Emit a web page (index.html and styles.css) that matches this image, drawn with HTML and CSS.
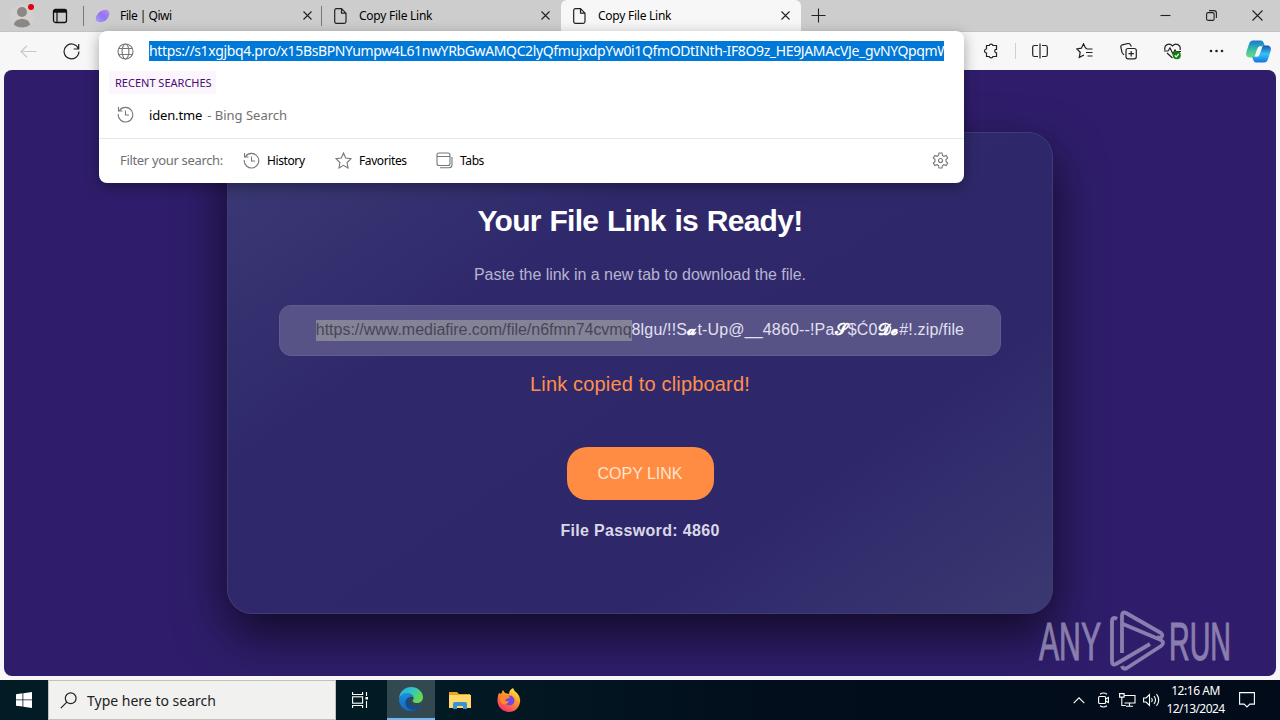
FILE: index.html
```html
<!DOCTYPE html>
<html lang="en">
<head>
    <meta charset="UTF-8">
    <meta name="viewport" content="width=device-width, initial-scale=1.0">
    <title>Copy File Link</title>
    <link rel="stylesheet" href="styles.css">
</head>
<body>
    <!-- Tab strip -->
    <div class="tab-bar">
        <svg class="profile" width="26" height="26" viewBox="0 0 26 26">
            <circle cx="13" cy="13" r="12" fill="#d4d0ce"/>
            <circle cx="13" cy="9" r="5" fill="#8b8785"/>
            <path d="M5 22c0-8 16-8 16 0q-8 5-16 0z" fill="#8b8785"/>
            <circle cx="22" cy="4" r="3" fill="#e3000f"/>
        </svg>
        <svg class="tab-actions" width="16" height="16" viewBox="0 0 16 16" fill="none" stroke="#111">
            <rect x="1.500" y="1.500" width="13" height="13" rx="2" stroke-width="1.300"/>
            <path d="M1.500 3.200h13" stroke-width="3"/>
            <path d="M5 4v10.500" stroke-width="1.200"/>
        </svg>
        <div class="tab tab-first">
            <svg width="16" height="16" viewBox="0 0 16 16">
                <defs>
                    <linearGradient id="qiwi" x1="0" y1="1" x2="1" y2="0">
                        <stop offset="0" stop-color="#a8a1ff"/>
                        <stop offset=".5" stop-color="#9275ed"/>
                        <stop offset="1" stop-color="#b88af5"/>
                    </linearGradient>
                </defs>
                <path d="M1 9C3 4 8 1 12 2c4 2 2 7 0 9-3 4-10 4-11 1-.5-1-.3-2 0-3z" fill="url(#qiwi)"/>
            </svg>
            <span class="tab-title title-qiwi">File | Qiwi</span>
            <svg class="close" width="9" height="9" viewBox="0 0 9 9"><path d="M.5.5l8 8M8.500.5l-8 8"/></svg>
        </div>
        <div class="tab">
            <svg class="doc" width="13" height="16" viewBox="0 0 13 16"><path d="M2.500.7H7.500L12 5.200v8.300q0 1.800-1.800 1.800H2.500Q.7 15.300.7 13.500v-11Q.7.7 2.500.7zM7.500.7v4.500H12"/></svg>
            <span class="tab-title">Copy File Link</span>
            <svg class="close" width="9" height="9" viewBox="0 0 9 9"><path d="M.5.5l8 8M8.500.5l-8 8"/></svg>
        </div>
        <div class="tab tab-active">
            <svg class="doc" width="13" height="16" viewBox="0 0 13 16"><path d="M2.500.7H7.500L12 5.200v8.300q0 1.800-1.800 1.800H2.500Q.7 15.300.7 13.500v-11Q.7.7 2.500.7zM7.500.7v4.500H12"/></svg>
            <span class="tab-title">Copy File Link</span>
            <svg class="close" width="9" height="9" viewBox="0 0 9 9"><path d="M.5.5l8 8M8.500.5l-8 8"/></svg>
        </div>
        <svg class="new-tab" width="15" height="15" viewBox="0 0 15 15"><path d="M7.500.5v14M.5 7.500h14"/></svg>
        <div class="window-buttons">
            <svg width="11" height="11" viewBox="0 0 11 11"><path d="M.5 5.500h10"/></svg>
            <svg width="11" height="11" viewBox="0 0 11 11"><rect x=".6" y="2.600" width="7.500" height="7.800" rx="1.500"/><path d="M3 .6h5q2.400 0 2.400 2.400v5"/></svg>
            <svg width="11" height="11" viewBox="0 0 11 11"><path d="M.5.5l10 10M10.500.5l-10 10"/></svg>
        </div>
    </div>

    <!-- Toolbar -->
    <div class="toolbar">
        <svg class="back" width="17" height="13" viewBox="0 0 17 13"><path d="M7 .7L1 6.500l6 5.800M1 6.500h15.500"/></svg>
        <svg class="reload" width="17" height="17" viewBox="0 0 17 17"><path d="M15.500 6A7.400 7.400 0 1 0 15.900 8.500M15.700 1v5h-5"/></svg>
        <div class="tools">
            <svg width="16" height="16" viewBox="0 0 16 16"><path d="M3.500 2.500h2.700a2 2 0 0 1 3.800 0h3.500v3.800a1.800 1.800 0 0 0 0 3.600v3.600H10a2 2 0 0 1-3.800 0H3.500V10a2 2 0 0 1 0-4z"/></svg>
            <span class="divider"></span>
            <svg class="split" width="16" height="16" viewBox="0 0 16 16"><path d="M8 .5v15M6 2.500H2.500q-1.800 0-1.800 1.800v7.400q0 1.800 1.800 1.800H6M10 2.500h3.500q1.800 0 1.800 1.800v7.400q0 1.800-1.800 1.800H10"/></svg>
            <svg width="17" height="16" viewBox="0 0 17 16"><path d="M11 5.500L9.500 5 7.500.8 5.400 5.200.8 5.900l3.400 3.300-.9 5.200L8 12M10.500 6h6M10 9.500h6.500M11.500 13h5"/></svg>
            <svg width="17" height="17" viewBox="0 0 17 17"><rect x="6" y="5.500" width="10.300" height="10.300" rx="2"/><path d="M11.200 8v5.400M8.500 10.700h5.400M4 12L2 9.500.8 4q-.2-1.600 1.400-2.200l6-1.300Q10 .4 10.500 2l1 1.500"/></svg>
            <svg width="18" height="17" viewBox="0 0 18 17"><path d="M1 7C-.5 2 5.500-1 8.500 3 11.500-1 17.500 2 16 7M0 8h4l2-3 3 6 2-4 1 1.500h5M3 10l5.500 5"/><circle cx="12.800" cy="12.300" r="4" fill="#138013" stroke="none"/><path d="M10.800 12.300l1.400 1.500 2.500-2.800" stroke="#fff"/></svg>
            <svg width="15" height="4" viewBox="0 0 15 4"><g fill="#222" stroke="none"><circle cx="2" cy="2" r="1.300"/><circle cx="7.500" cy="2" r="1.300"/><circle cx="13" cy="2" r="1.300"/></g></svg>
            <svg class="copilot" width="25" height="23" viewBox="0 0 25 23">
                <defs>
                    <linearGradient id="cpa" x1="0" y1="0" x2="0" y2="1">
                        <stop offset="0" stop-color="#1678d2"/>
                        <stop offset=".6" stop-color="#3cc6a4"/>
                        <stop offset="1" stop-color="#75da70"/>
                    </linearGradient>
                    <linearGradient id="cpb" x1="0" y1="0" x2="0" y2="1">
                        <stop offset="0" stop-color="#1a4fb4"/>
                        <stop offset=".5" stop-color="#34c4f4"/>
                        <stop offset="1" stop-color="#1274e2"/>
                    </linearGradient>
                </defs>
                <path d="M7 .5h8q2 0 3 3l1 3h-5q-2 0-3 3l-2 6q-1 2-3 2H3q-4-1-2.500-6L3 4Q4 .5 7 .5z" fill="url(#cpa)"/>
                <path d="M18 22.500h-8q-2 0-3-3l-1-3h4q3 0 4-3l2-6q1-2 3-2h3q4 1 2.500 6L22 19q-1 3.500-4 3.500z" fill="url(#cpb)"/>
                <path d="M13 6.500h3l-3.500 10h-3z" fill="#f7f7f7"/>
            </svg>
        </div>
    </div>

    <!-- Page shown in the browser -->
    <div class="viewport">
        <div class="container">
            <h1>Your File Link is Ready!</h1>
            <p class="hint">Paste the link in a new tab to download the file.</p>
            <div class="link-box"><span class="selected">https://www.mediafire.com/file/n6fmn74cvmq</span><span class="link-rest">8lgu/!!S<b>𝓪</b>t-Up@__4860--!Pa<b>𝓢</b>$Ć0<b>𝓓𝓮</b>#!.zip/file</span></div>
            <p class="message">Link copied to clipboard!</p>
            <button class="copy-button">COPY LINK</button>
            <p class="password">File Password: 4860</p>
        </div>
        <svg class="watermark" width="200" height="64" viewBox="0 0 200 64">
            <text x="1" y="50" textLength="62" lengthAdjust="spacingAndGlyphs">ANY</text>
            <text x="131" y="50" textLength="62" lengthAdjust="spacingAndGlyphs">RUN</text>
            <path d="M79 9q-5-3-5 3v39q0 5 4 3l34-20M84 43V6q0-5 4-3l35 20q3 3-1 5l-3-1M85 14l38 16q4 3 0 6L89 58q-4 2-5-2"/>
        </svg>
    </div>

    <!-- Address bar suggestions -->
    <div class="suggestions">
        <div class="address">
            <svg width="17" height="17" viewBox="0 0 17 17"><circle cx="8.500" cy="8.500" r="7.500"/><ellipse cx="8.500" cy="8.500" rx="3.400" ry="7.500"/><path d="M1.700 5.500h13.600M1.700 11.500h13.600"/></svg>
            <span class="url">https://s1xgjbq4.pro/x15BsBPNYumpw4L61nwYRbGwAMQC2lyQfmujxdpYw0i1QfmODtINth-IF8O9z_HE9JAMAcVJe_gvNYQpqmW</span>
        </div>
        <div class="recent">RECENT SEARCHES</div>
        <div class="result">
            <svg width="17" height="17" viewBox="0 0 17 17"><path d="M2.500 4.500A7.300 7.300 0 1 1 1.200 8M1.500 1v4h4M8.500 4.500V9H12"/></svg>
            <span class="result-text">iden.tme</span><span class="result-source">- Bing Search</span>
        </div>
        <div class="filters">
            <span class="filter-label">Filter your search:</span>
            <div class="filter filter-history">
                <svg width="17" height="17" viewBox="0 0 17 17"><path d="M2.500 4.500A7.300 7.300 0 1 1 1.200 8M1.500 1v4h4M8.500 4.500V9H12"/></svg>
                <span>History</span>
            </div>
            <div class="filter filter-favorites">
                <svg width="17" height="17" viewBox="0 0 17 17"><path d="M8.500 1l2.200 5 5.300.7-3.900 3.800.9 5.500-4.500-2.700L4 16l.9-5.500L1 6.700 6.300 6z"/></svg>
                <span>Favorites</span>
            </div>
            <div class="filter filter-tabs">
                <svg width="17" height="17" viewBox="0 0 17 17"><rect x="1" y="1" width="13" height="12.500" rx="2"/><path d="M1 4.500h13M4 15.800h9q3 0 3-3V5"/></svg>
                <span>Tabs</span>
            </div>
            <svg class="gear" width="17" height="17" viewBox="0 0 17 17"><path d="M7 1h3l.5 2.500 1.300.8 2.400-.9 1.500 2.600L14 7.600v1.800l1.700 1.600-1.500 2.600-2.400-.9-1.300.8L10 16H7l-.5-2.500-1.300-.8-2.400.9L1.300 11 3 9.400V7.600L1.300 6l1.500-2.600 2.400.9 1.300-.8z"/><circle cx="8.500" cy="8.500" r="2"/></svg>
        </div>
    </div>

    <!-- Windows taskbar -->
    <div class="taskbar">
        <svg class="start" width="16" height="16" viewBox="0 0 16 16" fill="#fff"><path d="M0 2.200L6.500 1.300v6.200H0zM7.300 1.200L16 0v7.500H7.300zM0 8.300h6.500v6.300L0 13.700zM7.300 8.300H16V16l-8.700-1.200z"/></svg>
        <div class="search">
            <svg width="17" height="17" viewBox="0 0 17 17"><circle cx="10.700" cy="6.300" r="5.400"/><path d="M6.800 10.200L.8 16.200"/></svg>
            <span>Type here to search</span>
        </div>
        <div class="task">
            <svg width="17" height="16" viewBox="0 0 17 16" fill="none" stroke="#fff" stroke-width="1.100"><path d="M.6 0v2.500h10V0M.6 16v-2.500h10V16M14.500 0v4M14.500 9v7"/><rect x=".6" y="4.800" width="10" height="6.400"/><rect x="13.500" y="5" width="2.500" height="2.500" fill="#fff" stroke="none"/></svg>
        </div>
        <div class="task task-active">
            <svg width="24" height="24" viewBox="0 0 24 24">
                <defs>
                    <linearGradient id="edge-top" x1="0" y1="0" x2="1" y2=".5">
                        <stop offset="0" stop-color="#28a9e0"/>
                        <stop offset=".5" stop-color="#2fc5c9"/>
                        <stop offset="1" stop-color="#65d94f"/>
                    </linearGradient>
                    <linearGradient id="edge-low" x1="0" y1="0" x2="0" y2="1">
                        <stop offset="0" stop-color="#1b8fdd"/>
                        <stop offset="1" stop-color="#1567b8"/>
                    </linearGradient>
                </defs>
                <path d="M0 11C1 4 6 0 12 0c7 0 12 5 12 10 0 4-3 6-6 6-4 0-5-2-4-3 2-3-1-6-5-6-4 0-7 1-9 4z" fill="url(#edge-top)"/>
                <path d="M0 12c1-4 5-6 8-6 4 0 6 2 6 4-3-1-6 1-6 4 0 5 7 8 14 4-3 5-8 6-12 6C4 23 0 18 0 12z" fill="url(#edge-low)"/>
                <path d="M11 10c-7 2-6 11 2 13 4 0 7-2 9-5-7 3-13 0-13-4 0-2 1-3 2-4z" fill="#134a91"/>
            </svg>
        </div>
        <div class="task">
            <svg width="22" height="19" viewBox="0 0 22 19"><path d="M0 1h8l2 2h11v14H0z" fill="#e9a51d"/><path d="M0 4h22v13H0z" fill="#ffd96c"/><path d="M4 18v-5q0-2 2-2h10q2 0 2 2v5h-4v-3H8v3z" fill="#3b92d3"/></svg>
        </div>
        <div class="task task-firefox">
            <svg width="24" height="24" viewBox="0 0 24 24">
                <defs>
                    <linearGradient id="fox" x1=".8" y1="0" x2=".2" y2="1">
                        <stop offset="0" stop-color="#fff044"/>
                        <stop offset=".4" stop-color="#ff9a28"/>
                        <stop offset="1" stop-color="#f4276d"/>
                    </linearGradient>
                </defs>
                <path d="M2 5l2 1 2-4 2 3 4 1q0-4 4-6 1 3 4 5 4 4 3 9c-1 6-5 10-11 10S0 19 .5 12C.7 9 1 7 2 5z" fill="url(#fox)"/>
                <circle cx="12.500" cy="12.500" r="5" fill="#7446e5"/>
                <path d="M4 8q4-2 8 0l1 2q-3 0-5 2 1 2 4 1-2 4-6 3-4-2-2-8z" fill="#ff8b25"/>
            </svg>
        </div>
        <div class="tray">
            <svg width="12" height="7" viewBox="0 0 12 7"><path d="M.7 6.200L6 .9l5.300 5.300"/></svg>
            <svg class="meet" width="11" height="16" viewBox="0 0 11 16"><rect x=".6" y="4.500" width="7" height="7" rx="1"/><path d="M7.600 7l2.800-1.500v5L7.600 9M2 2.200q3.500-2.500 7 0M2 13.800q3.500 2.500 7 0"/></svg>
            <svg class="network" width="17" height="14" viewBox="0 0 17 14"><path d="M5 2.500h11v7.500H5.500M10.500 10v3M7 13.300h7M.6.600h4.500v3.500H.6zM2.800 4v8.500h4"/></svg>
            <svg class="volume" width="17" height="14" viewBox="0 0 17 14"><path d="M.6 5h2.500l3.400-3.500v11L3.100 9H.6zM8.500 5q1.500 2 0 4M11 3q3 4 0 8M13.500 1.200q4.500 5.800 0 11.600"/></svg>
            <div class="clock"><span>12:16 AM</span><span class="date">12/13/2024</span></div>
            <svg class="notice" width="16" height="16" viewBox="0 0 16 16"><path d="M.6.6h14.800v11.500h-4.500L8 15l-2.900-2.900H.6z"/></svg>
        </div>
    </div>
</body>
</html>
```
FILE: styles.css
```css
* {
    box-sizing: border-box;
}
body {
    margin: 0;
    width: 1280px;
    height: 720px;
    overflow: hidden;
    display: flex;
    flex-direction: column;
    background-color: #f7f7f7;
    font-family: "Noto Sans", "Open Sans", sans-serif;
    font-size: 12px;
    color: #000;
}
svg {
    flex: none;
    display: block;
}
span {
    white-space: nowrap;
}

/* tabs */
.tab-bar {
    height: 32px;
    flex: none;
    display: flex;
    align-items: center;
    background-color: #cdcdcd;
    border-bottom: 1px solid #c4c4c4;
}
.profile {
    margin-left: 9px;
}
.tab-actions {
    margin: 0 15px 0 17px;
}
.tab {
    width: 239px;
    height: 31px;
    padding: 0 11px 0 12px;
    display: flex;
    align-items: center;
}
.tab-first {
    height: 20px;
    border-left: 1px solid #777;
    border-right: 1px solid #777;
    padding: 0 9px 0 11px;
}
.tab-active {
    width: 240px;
    background-color: #f7f7f7;
    border-radius: 6px 6px 0 0;
}
.tab-title {
    margin: 0 auto 0 12px;
    letter-spacing: -0.25px;
}
.title-qiwi {
    margin-left: 9px;
    letter-spacing: -0.5px;
}
.doc {
    fill: none;
    stroke: #222;
    stroke-width: 1.2;
}
.close, .new-tab, .window-buttons svg {
    fill: none;
    stroke: #222;
    stroke-width: 1.1;
}
.new-tab {
    margin-left: 10px;
}
.window-buttons {
    margin: 0 17px 0 auto;
    display: flex;
    gap: 35px;
}

/* toolbar */
.toolbar {
    height: 38px;
    flex: none;
    display: flex;
    align-items: center;
    padding: 0 9px 0 20px;
}
.toolbar svg {
    fill: none;
    stroke: #222;
    stroke-width: 1.2;
}
.toolbar .back {
    stroke: #c9c9c9;
}
.reload {
    margin-left: 26px;
}
.tools {
    margin-left: auto;
    display: flex;
    align-items: center;
    gap: 27px;
}
.split {
    margin-right: 1px;
}
.toolbar .copilot {
    margin-left: -5px;
    stroke: none;
}
.divider {
    width: 1px;
    height: 16px;
    margin: 0 -11px;
    background-color: #d0d0d0;
}

/* page */
.viewport {
    position: relative;
    height: 606px;
    flex: none;
    margin: 0 4px 4px;
    border-radius: 8px;
    overflow: hidden;
    background-color: #2f1d6b;
    font-family: "Liberation Sans", Arial, sans-serif;
}
.container {
    width: 826px;
    height: 482px;
    margin: 62px auto 0 223px;
    padding: 71px 52px 0;
    border: 1px solid #413b77;
    border-radius: 25px;
    background: linear-gradient(145deg, #3c3b75 0%, #2f296b 32%, #2e286a 72%, #3b3871 100%);
    box-shadow: 0 20px 50px rgba(0, 0, 0, 0.65);
    display: flex;
    flex-direction: column;
    align-items: center;
    color: #fff;
}
h1 {
    margin: 0;
    font-size: 30px;
    line-height: 34px;
    letter-spacing: -0.7px;
    word-spacing: 1px;
}
.hint {
    margin: 27px 0 0;
    font-size: 16px;
    line-height: 20px;
    letter-spacing: -0.03px;
    color: #b7b4d0;
}
.link-box {
    align-self: stretch;
    height: 51px;
    margin: 20px -1px 0;
    display: flex;
    align-items: center;
    justify-content: center;
    border: 1px solid #625d90;
    border-radius: 12px;
    background-color: #575386;
    font-size: 16px;
    color: #e2e0f0;
}
.selected {
    height: 21px;
    line-height: 19px;
    letter-spacing: -0.02px;
    background-color: #848398;
    color: #474657;
}
.link-rest {
    line-height: 19px;
    height: 21px;
    letter-spacing: 0.16px;
}
.link-rest b {
    font-size: 16px;
    letter-spacing: 1.3px;
    color: #fff;
}
.message {
    margin: 17px 0 0;
    font-size: 20px;
    line-height: 23px;
    letter-spacing: 0.17px;
    color: #ff8f4a;
}
.copy-button {
    width: 147px;
    height: 53px;
    margin-top: 51px;
    border: none;
    border-radius: 20px;
    background-color: #ff8c42;
    font-family: inherit;
    font-size: 16px;
    color: #ffe4cf;
}
.password {
    margin: 21px 0 0;
    font-size: 16px;
    line-height: 20px;
    letter-spacing: 0.33px;
    font-weight: bold;
    color: #dad8e8;
}
.watermark {
    position: absolute;
    left: 1034px;
    top: 540px;
    overflow: visible;
    opacity: 0.5;
    font-size: 53px;
    fill: #e3dff0;
    stroke: #e3dff0;
    stroke-width: 1;
}
.watermark path {
    fill: none;
    stroke-width: 3.8;
    stroke-linejoin: round;
}

/* address bar dropdown */
.suggestions {
    position: absolute;
    left: 99px;
    top: 31px;
    width: 865px;
    height: 152px;
    border-radius: 8px;
    background-color: #fff;
    box-shadow: 0 4px 14px rgba(0, 0, 0, 0.35);
}
.suggestions svg {
    fill: none;
    stroke: #777;
    stroke-width: 1.1;
}
.address {
    height: 40px;
    display: flex;
    align-items: center;
    padding-left: 18px;
}
.url {
    width: 795px;
    height: 20px;
    margin-left: 15px;
    line-height: 20px;
    overflow: hidden;
    background-color: #0078d7;
    color: #fff;
    font-size: 14px;
    letter-spacing: -0.37px;
}
.recent {
    width: 107px;
    height: 23px;
    margin-left: 10px;
    padding-left: 6px;
    line-height: 23px;
    background-color: #faf6fb;
    color: #4b0a77;
    font-size: 11px;
}
.result {
    height: 44px;
    display: flex;
    align-items: center;
    padding: 0 0 3px 18px;
    font-size: 13px;
}
.result-text {
    margin-left: 15px;
    letter-spacing: -0.15px;
}
.result-source {
    margin-left: 5px;
    color: #707070;
}
.filters {
    height: 45px;
    border-top: 1px solid #e8e8e8;
    display: flex;
    align-items: center;
    padding: 0 15px 2px 21px;
}
.filter-label {
    width: 123px;
    font-size: 13px;
    letter-spacing: -0.33px;
    color: #707070;
}
.filter {
    display: flex;
    align-items: center;
    gap: 7px;
    letter-spacing: -0.4px;
}
.filter-history {
    width: 92px;
}
.filter-favorites {
    width: 101px;
}
.gear {
    margin-left: auto;
}

/* taskbar */
.taskbar {
    height: 40px;
    flex: none;
    display: flex;
    align-items: center;
    background: linear-gradient(90deg, #021b24 0%, #021a24 35%, #020e1b 60%, #020b1a 100%);
    color: #fff;
}
.start {
    margin: 0 16px;
}
.search {
    width: 288px;
    height: 40px;
    padding-left: 11px;
    display: flex;
    align-items: center;
    gap: 10px;
    background-color: #f1f1f0;
    border: 1px solid #c2c2bd;
    color: #222;
    font-size: 14px;
}
.search svg {
    fill: none;
    stroke: #222;
    stroke-width: 1.2;
}
.task {
    width: 48px;
    height: 40px;
    display: flex;
    align-items: center;
    justify-content: center;
    margin-right: 2px;
}
.task-active {
    margin-left: 1px;
    background-color: #334952;
    border-bottom: 2px solid #76b9ed;
    margin-right: 1px;
}
.task-firefox {
    margin-left: -1px;
}
.tray {
    height: 40px;
    margin-left: auto;
    padding-right: 25px;
    display: flex;
    align-items: center;
}
.tray svg {
    fill: none;
    stroke: #fff;
    stroke-width: 1.1;
}
.meet {
    margin-left: 13px;
}
.network {
    margin-left: 10px;
}
.volume {
    margin-left: 7px;
}
.clock {
    width: 71px;
    display: flex;
    flex-direction: column;
    align-items: center;
    line-height: 18px;
    padding-bottom: 1px;
    letter-spacing: -0.45px;
}
.date {
    letter-spacing: -0.6px;
}
.notice {
    margin-left: 8px;
}
```
